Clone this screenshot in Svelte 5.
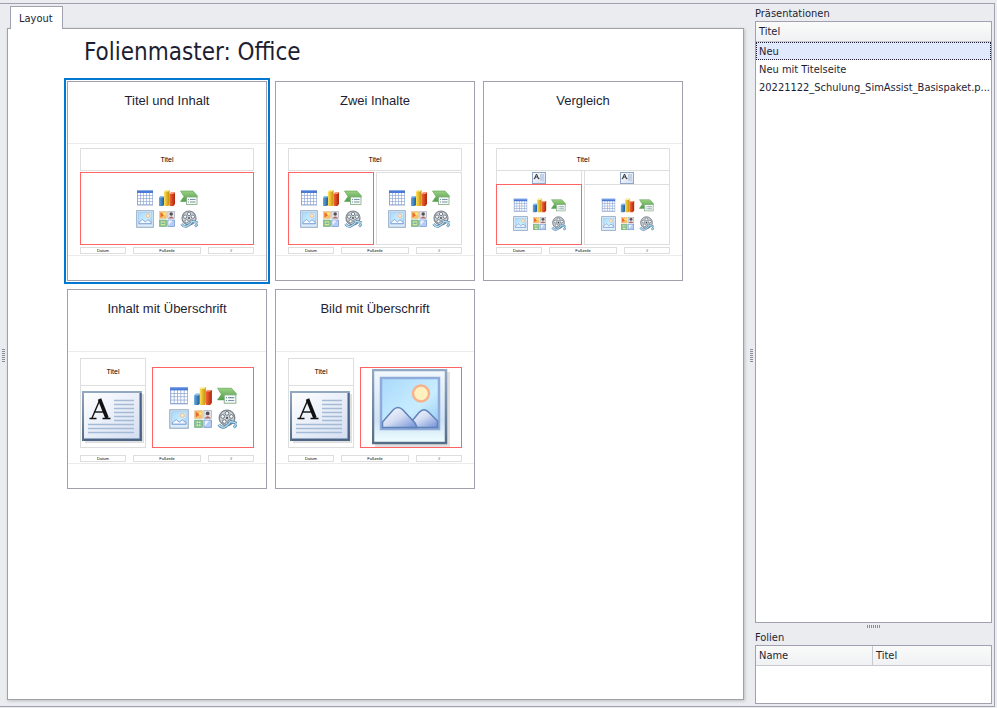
<script lang="ts">
  type Layout = { title: string; kind: string };

  const layouts: Layout[] = [
    { title: 'Titel und Inhalt', kind: 'content' },
    { title: 'Zwei Inhalte', kind: 'two' },
    { title: 'Vergleich', kind: 'compare' },
    { title: 'Inhalt mit Überschrift', kind: 'caption' },
    { title: 'Bild mit Überschrift', kind: 'picture' }
  ];

  const presentations = ['Neu', 'Neu mit Titelseite', '20221122_Schulung_SimAssist_Basispaket.p...'];
  const contentIcons = ['table', 'chart', 'smartart', 'image', 'clipart', 'film'];

  let selectedLayout = $state(0);
  let selectedPresentation = $state(0);
</script>

{#snippet contentBox(size: string, active: boolean)}
  <span class="box icons {size}" class:active>
    {#each contentIcons as icon}
      <svg viewBox="0 0 18 18"><use href="#{icon}" /></svg>
    {/each}
  </span>
{/snippet}

<svg class="symbols" aria-hidden="true">
  <defs>
    <linearGradient id="sky" x1="0" y1="0" x2="1" y2="1">
      <stop offset="0" stop-color="#a9d9fb" />
      <stop offset="0.6" stop-color="#c9edff" />
      <stop offset="1" stop-color="#8fc4f0" />
    </linearGradient>
    <linearGradient id="mat" x1="0" y1="0" x2="0" y2="1">
      <stop offset="0" stop-color="#f2f8fe" />
      <stop offset="0.7" stop-color="#cfe2f5" />
      <stop offset="1" stop-color="#effeff" />
    </linearGradient>
    <linearGradient id="edge" x1="0" y1="0" x2="0" y2="1">
      <stop offset="0" stop-color="#92a8c2" />
      <stop offset="1" stop-color="#566d86" />
    </linearGradient>
    <linearGradient id="paper" x1="0" y1="0" x2="1" y2="1">
      <stop offset="0" stop-color="#ffffff" />
      <stop offset="1" stop-color="#d3ddf2" />
    </linearGradient>
    <linearGradient id="snow" x1="0" y1="0" x2="1" y2="1">
      <stop offset="0" stop-color="#ffffff" />
      <stop offset="0.5" stop-color="#d2dcf2" />
      <stop offset="1" stop-color="#6f8fd8" />
    </linearGradient>
    <linearGradient id="blue" x1="0" y1="0" x2="1" y2="0">
      <stop offset="0" stop-color="#63a8e0" />
      <stop offset="1" stop-color="#1d5796" />
    </linearGradient>
    <linearGradient id="yellow" x1="0" y1="0" x2="1" y2="0">
      <stop offset="0" stop-color="#ffe25a" />
      <stop offset="1" stop-color="#c58a06" />
    </linearGradient>
    <linearGradient id="red" x1="0" y1="0" x2="1" y2="0">
      <stop offset="0" stop-color="#f4683a" />
      <stop offset="1" stop-color="#ad2409" />
    </linearGradient>
    <linearGradient id="green" x1="0" y1="0" x2="0" y2="1">
      <stop offset="0" stop-color="#9bd184" />
      <stop offset="1" stop-color="#4f9c47" />
    </linearGradient>
  </defs>

  <symbol id="table" viewBox="0 0 18 18">
    <rect x="1" y="1" width="16" height="15.500" fill="#93a9d4" />
    <rect x="1" y="1" width="16" height="3" fill="#4a7ad6" />
    <rect x="1" y="1" width="16" height="1" fill="#86aaea" />
    <g fill="#fff">
      {#each [4, 7, 10, 13] as y}
        {#each [2, 5, 8, 11, 14] as x}
          <rect {x} {y} width="2.3" height="2.3" />
        {/each}
      {/each}
    </g>
  </symbol>

  <symbol id="chart" viewBox="0 0 18 18">
    <path d="M1 8.500 2.500 7H6.500v8.500L5 17H1z" fill="url(#blue)" />
    <path d="M1 8.500 2.500 7H6.500L5.500 8.500z" fill="#8cc4ee" />
    <path d="M11.500 5 13 3.500h4V15l-1.500 2h-4z" fill="url(#red)" />
    <path d="M11.500 5 13 3.500h4L15.500 5z" fill="#ff9a70" />
    <path d="M6 2.500 7.500 1H11.500v14L10.500 17H6z" fill="url(#yellow)" />
    <path d="M6 2.500 7.500 1h4L10.500 2.500z" fill="#fff09a" />
  </symbol>

  <symbol id="smartart" viewBox="0 0 18 18">
    <path d="M.500 2H13l4.500 5-3 5.500H.500L4 7.500z" fill="url(#green)" stroke="#5ba353" stroke-width=".6" />
    <rect x="6.500" y="8" width="10.500" height="7.500" fill="#f4faf4" stroke="#7fa883" stroke-width=".8" />
    <path d="M8 10.500h1M10 10.500h5.500M8 13h1M10 13h5.500" stroke="#7993a8" stroke-width="1" />
  </symbol>

  <symbol id="image" viewBox="0 0 18 18">
    <rect x=".7" y=".7" width="16.600" height="16.600" fill="#dcecf9" stroke="#93abc4" stroke-width="1" />
    <rect x="2.500" y="2.500" width="13" height="11.500" fill="url(#sky)" stroke="#a5c6ea" stroke-width=".7" />
    <circle cx="12" cy="5.800" r="1.700" fill="#fff0c8" stroke="#f5b284" stroke-width=".8" />
    <path d="M3 13.600V12.300L6.500 9.500l2.800 2.400L12 9.800l3.200 2.500v1.300z" fill="#f4f8ff" stroke="#6b92d0" stroke-width=".7" />
  </symbol>

  <symbol id="clipart" viewBox="0 0 18 18">
    <rect x="1.500" y="1.500" width="7" height="7" fill="#f9bd63" stroke="#dcc49c" stroke-width=".6" />
    <path d="M2.500 2.500 6.500 5 2.500 7.500z" fill="#ea6a34" />
    <circle cx="6.500" cy="4" r="1.400" fill="#ffec70" />
    <rect x="9.800" y="1.500" width="6.700" height="7" fill="#dfe3ec" stroke="#9ba6b8" stroke-width=".6" />
    <circle cx="13.200" cy="4" r="1.700" fill="#5c4c4c" />
    <path d="M10.500 8.300Q13.200 4.800 16 8.300z" fill="#b9685c" />
    <rect x="1.500" y="10" width="7" height="6.500" fill="#8fc58a" stroke="#5ea58a" stroke-width=".6" />
    <path d="M3.500 11.500 6.500 15M6.500 11.500 3.500 15" stroke="#e8ec96" stroke-width="1.400" />
    <circle cx="5" cy="13.200" r=".9" fill="#5aa5bb" />
    <rect x="9.800" y="10" width="6.700" height="6.500" fill="#b5cdf3" stroke="#6f8fd0" stroke-width=".7" />
    <path d="M10.500 10.500h4l-4 5z" fill="#edf4ff" />
  </symbol>

  <symbol id="film" viewBox="0 0 18 18">
    <circle cx="9" cy="8" r="7" fill="#cdd3d8" stroke="#7c858e" stroke-width="1.200" />
    <g fill="#f6f8fa" stroke="#6d757e" stroke-width=".9">
      <circle cx="9" cy="3.900" r="1.700" />
      <circle cx="12.900" cy="6.700" r="1.700" />
      <circle cx="11.400" cy="11.300" r="1.700" />
      <circle cx="6.600" cy="11.300" r="1.700" />
      <circle cx="5.100" cy="6.700" r="1.700" />
    </g>
    <circle cx="9" cy="8" r="1" fill="#4d555e" />
    <path d="M1.500 14Q4.500 18 8 15.500T11.500 12t4 0-.5 4.500" fill="none" stroke="#4f7fa3" stroke-width="2.600" />
    <path d="M1.500 14Q4.500 18 8 15.500T11.500 12t4 0-.5 4.500" fill="none" stroke="#b4dcf2" stroke-width="1.300" />
  </symbol>

  <symbol id="text" viewBox="0 0 62 52">
    <rect x="3" y="3" width="59" height="49" fill="#000" opacity=".12" />
    <rect x="1" y="1" width="58" height="48" fill="url(#paper)" stroke="url(#edge)" stroke-width="2" />
    <path d="M58.500 2v46.500H2" fill="none" stroke="#4a6486" stroke-width="2" />
    <path
      d="M32 9.500h20M32 13.500h20M32 17.500h20M32 21.500h20M32 25.500h20M32 29.500h20M6 33.500h46M6 37.500h46M6 41.500h46"
      stroke="#a5bad4"
      stroke-width="1.600"
    />
    <g stroke="#111" fill="none">
      <path d="M10 27 18 8.500" stroke-width="1.400" />
      <path d="M17.500 8 25 27" stroke-width="3.600" />
      <path d="M12 21h11" stroke-width="1.400" />
      <path d="M7.500 27.500h7M20.500 27.500h8" stroke-width="1.400" />
    </g>
  </symbol>

  <symbol id="text-small" viewBox="0 0 14 12">
    <rect x=".5" y=".5" width="13" height="11" fill="url(#paper)" stroke="#8fa6c4" />
    <rect x="8" y="2" width="4" height="7" fill="#c3d1e6" />
    <path d="M2.500 6.500 4.500 2l2 4.500M3 5h3M1.800 6.600h1.500M5.800 6.600h1.700" fill="none" stroke="#222" stroke-width=".9" />
  </symbol>

  <symbol id="photo" viewBox="0 0 78 78">
    <rect x="3" y="3" width="75" height="75" fill="#000" opacity=".12" />
    <rect x="1" y="1" width="73" height="73" fill="url(#mat)" stroke="url(#edge)" stroke-width="2.500" />
    <rect x="9" y="9" width="58" height="51" fill="url(#sky)" stroke="#8fabd9" stroke-width="2.500" />
    <circle cx="49" cy="24.500" r="8" fill="#fff0c0" stroke="#f7b28c" stroke-width="2.500" />
    <path d="M35 58 47 43.500Q52 38 57 43.500L65.500 52v6.500H35z" fill="url(#snow)" stroke="#5f83b8" stroke-width="1.500" />
    <path d="M10.500 58.500V53L21 41Q26 36 31 41L43 54l2 4.500z" fill="url(#snow)" stroke="#5f83b8" stroke-width="1.500" />
  </symbol>
</svg>

<div class="page">
  <div class="frame">
    <div class="splitter left"><i class="grip"></i></div>

    <main>
      <nav class="tabs">
        <button class="tab">Layout</button>
      </nav>
      <section class="panel">
        <h1>Folienmaster: Office</h1>
        <div class="gallery">
          {#each layouts as layout, i}
            <button class="card" class:selected={selectedLayout === i} onclick={() => (selectedLayout = i)}>
              <span class="card-title">{layout.title}</span>
              <span class="slide">
                <span class="slide-body {layout.kind}">
                  {#if layout.kind === 'caption' || layout.kind === 'picture'}
                    <span class="side">
                      <span class="box head">Titel</span>
                      <span class="box text"><svg viewBox="0 0 62 52"><use href="#text" /></svg></span>
                    </span>
                    {#if layout.kind === 'caption'}
                      {@render contentBox('large', true)}
                    {:else}
                      <span class="box active photo"><svg viewBox="0 0 78 78"><use href="#photo" /></svg></span>
                    {/if}
                  {:else}
                    <span class="box head">Titel</span>
                    {#if layout.kind === 'compare'}
                      <span class="columns labels">
                        <span class="box"><svg viewBox="0 0 14 12"><use href="#text-small" /></svg></span>
                        <span class="box"><svg viewBox="0 0 14 12"><use href="#text-small" /></svg></span>
                      </span>
                    {/if}
                    <span class="columns">
                      {@render contentBox(layout.kind === 'compare' ? 'small' : 'medium', true)}
                      {#if layout.kind !== 'content'}
                        {@render contentBox(layout.kind === 'compare' ? 'small' : 'medium', false)}
                      {/if}
                    </span>
                  {/if}
                </span>
                <span class="footer">
                  <span class="box">Datum</span>
                  <span class="box wide">Fußzeile</span>
                  <span class="box">#</span>
                </span>
              </span>
            </button>
          {/each}
        </div>
      </section>
    </main>

    <div class="splitter"><i class="grip"></i></div>

    <aside>
      <h2>Präsentationen</h2>
      <div class="list presentations">
        <table>
          <thead>
            <tr><th>Titel</th></tr>
          </thead>
          <tbody>
            {#each presentations as name, i}
              <tr class:current={selectedPresentation === i} onclick={() => (selectedPresentation = i)}>
                <td>{name}</td>
              </tr>
            {/each}
          </tbody>
        </table>
      </div>
      <div class="splitter horizontal"><i class="grip"></i></div>
      <h2>Folien</h2>
      <div class="list slides">
        <table>
          <thead>
            <tr><th class="name">Name</th><th>Titel</th></tr>
          </thead>
        </table>
      </div>
    </aside>
  </div>
</div>

<style>
  :global(body) {
    background: #ebecef;
  }

  .symbols {
    position: absolute;
    width: 0;
    height: 0;
  }

  .page {
    box-sizing: border-box;
    min-height: 100vh;
    display: flex;
    padding: 3px 2px 1px 0;
    background: #ebecef;
    color: #1e1e32;
    font: 11px/14px Tahoma, 'DejaVu Sans Condensed', 'DejaVu Sans', sans-serif;
  }

  .frame {
    flex: 1;
    display: flex;
    min-width: 0;
    padding-right: 2px;
    border: solid #a0a0af;
    border-width: 1px 1px 1px 0;
  }

  button {
    margin: 0;
    padding: 0;
    color: inherit;
    font: inherit;
    background: #fff;
    border: 1px solid #a0a0af;
  }

  .splitter {
    flex: none;
    width: 11px;
    display: flex;
    align-items: center;
    justify-content: center;
    padding-left: 3px;
    box-sizing: border-box;
  }

  .splitter.left {
    width: 7px;
    padding: 0;
  }

  .grip {
    width: 3px;
    height: 13px;
    background: repeating-linear-gradient(#8c8c9b 0 1px, transparent 1px 2px);
  }

  .splitter.horizontal {
    width: auto;
    height: 7px;
    padding: 0;
  }

  .horizontal .grip {
    width: 13px;
    height: 3px;
    background: repeating-linear-gradient(90deg, #8c8c9b 0 1px, transparent 1px 2px);
  }

  main {
    flex: 1;
    min-width: 0;
    display: flex;
    flex-direction: column;
    padding: 2px 0 6px;
  }

  .tabs {
    display: flex;
    padding-left: 3px;
    margin-bottom: -1px;
    z-index: 1;
  }

  .tab {
    height: 23px;
    padding: 2px 9px 0 8px;
    border-bottom: 0;
  }

  .panel {
    flex: 1;
    padding: 8px 8px 8px 59px;
    background: #fff;
    border: 1px solid #a0a0a5;
    box-shadow: 1px 1px 3px rgba(0, 0, 0, 0.2);
  }

  h1 {
    margin: 0 0 14px 17px;
    font-size: 24px;
    line-height: 30px;
    font-weight: normal;
  }

  .gallery {
    display: flex;
    flex-wrap: wrap;
    gap: 8px;
  }

  .card {
    width: 200px;
    display: flex;
    flex-direction: column;
    padding-bottom: 24px;
    font-family: 'Liberation Sans', Arial, sans-serif;
    text-align: center;
  }

  .card.selected {
    outline: 2px solid #0078d2;
    outline-offset: 1px;
  }

  .card-title {
    height: 50px;
    padding-top: 11px;
    width: 100%;
    font-size: 13px;
    line-height: 16px;
  }

  .slide {
    box-sizing: border-box;
    width: 100%;
    height: 113px;
    display: flex;
    flex-direction: column;
    gap: 2px;
    padding: 4px 12px 1px;
    border: solid #ebebeb;
    border-width: 1px 0;
    color: #000;
  }

  .slide-body {
    flex: 1;
    display: flex;
    flex-direction: column;
    gap: 1px;
    min-height: 0;
  }

  .slide-body.compare {
    gap: 0;
  }

  .slide-body.caption,
  .slide-body.picture {
    flex-direction: row;
    gap: 6px;
    padding: 2px 0 5px;
  }

  .box {
    box-sizing: border-box;
    display: flex;
    align-items: center;
    justify-content: center;
    border: 1px solid #dedede;
  }

  .box.active {
    border-color: #ff6464;
  }

  .head {
    height: 23px;
    font-size: 7px;
    line-height: 8px;
  }

  .columns {
    flex: 1;
    display: flex;
    gap: 2px;
  }

  .columns .box {
    flex: 1;
  }

  .columns.labels {
    flex: none;
    height: 15px;
    margin: -1px 0;
  }

  .labels svg {
    width: 14px;
    height: 12px;
  }

  .icons {
    display: grid;
    grid-template-columns: repeat(3, auto);
    gap: 3px 4px;
    align-content: center;
  }

  .icons svg {
    width: 18px;
    height: 18px;
  }

  .icons.small svg {
    width: 15px;
    height: 15px;
  }

  .icons.large svg {
    width: 20px;
    height: 20px;
  }

  .side {
    width: 66px;
    display: flex;
    flex-direction: column;
  }

  .side .head {
    height: 28px;
    margin-bottom: -1px;
  }

  .side .text {
    flex: 1;
  }

  .text svg {
    width: 62px;
    height: 52px;
  }

  .caption > .box,
  .picture > .box {
    flex: 1;
    margin-top: 9px;
  }

  .photo svg {
    width: 78px;
    height: 78px;
  }

  .footer {
    display: flex;
    gap: 7px;
    font-size: 4px;
    line-height: 5px;
  }

  .footer .box {
    width: 46px;
    height: 7px;
  }

  .footer .wide {
    flex: 1;
  }

  aside {
    flex: none;
    width: 237px;
    display: flex;
    flex-direction: column;
    padding: 2px 0;
  }

  h2 {
    margin: 0;
    font-size: 11px;
    line-height: 15px;
    font-weight: normal;
  }

  .list {
    background: #fff;
    border: 1px solid #a0a0af;
  }

  .presentations {
    flex: 1;
  }

  .slides {
    height: 57px;
  }

  table {
    width: 100%;
    table-layout: fixed;
    border-collapse: separate;
    border-spacing: 0;
  }

  th,
  td {
    box-sizing: border-box;
    padding: 0 3px;
    text-align: left;
    font-weight: normal;
    white-space: nowrap;
  }

  th {
    height: 20px;
    background: linear-gradient(#fafafa, #f0f1f3);
    border-bottom: 1px solid #c8c8d2;
  }

  th + th {
    border-left: 1px solid #c8c8d2;
  }

  th.name {
    width: 116px;
  }

  td {
    height: 18px;
    padding: 2px 0 0 2px;
    border: 1px solid transparent;
  }

  .current td {
    background: #e1e9fd;
    border: 1px dotted #1e1e32;
  }
</style>
